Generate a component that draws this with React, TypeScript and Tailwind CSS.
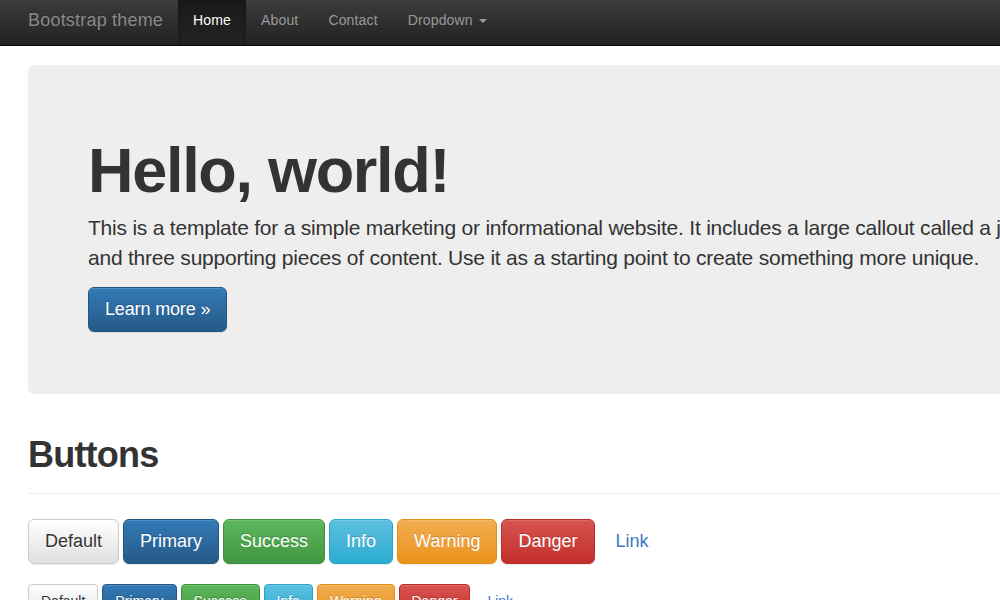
import React from 'react';

interface BtnProps {
  label: string;
  variant: string;
  size: 'lg' | 'md';
}

const variants: Record<string, string> = {
  default:
    'bg-linear-to-b from-[#ffffff] to-[#e0e0e0] border-[#cccccc] text-[#333333] [text-shadow:0_1px_0_#fff]',
  primary:
    'bg-linear-to-b from-[#337ab7] to-[#265a88] border-[#245580] text-white [text-shadow:0_-1px_0_rgba(0,0,0,0.2)]',
  success:
    'bg-linear-to-b from-[#5cb85c] to-[#419641] border-[#3e8f3e] text-white [text-shadow:0_-1px_0_rgba(0,0,0,0.2)]',
  info:
    'bg-linear-to-b from-[#5bc0de] to-[#2aabd2] border-[#28a4c9] text-white [text-shadow:0_-1px_0_rgba(0,0,0,0.2)]',
  warning:
    'bg-linear-to-b from-[#f0ad4e] to-[#eb9316] border-[#e38d13] text-white [text-shadow:0_-1px_0_rgba(0,0,0,0.2)]',
  danger:
    'bg-linear-to-b from-[#d9534f] to-[#c12e2a] border-[#b92c28] text-white [text-shadow:0_-1px_0_rgba(0,0,0,0.2)]',
  link: 'border-transparent text-[#3a78c3]',
};

const Btn: React.FC<BtnProps> = ({ label, variant, size }) => {
  const sizing =
    size === 'lg'
      ? 'h-[45px] px-4 text-[18px] rounded-[6px]'
      : 'h-[34px] px-3 text-[14px] rounded-[4px]';
  const shadow =
    variant === 'link' ? '' : 'shadow-[inset_0_1px_0_rgba(255,255,255,0.15),0_1px_1px_rgba(0,0,0,0.075)]';
  return (
    <button className={`flex items-center border ${sizing} ${variants[variant]} ${shadow}`}>
      {label}
    </button>
  );
};

const buttons = ['Default', 'Primary', 'Success', 'Info', 'Warning', 'Danger', 'Link'];

const Navbar: React.FC = () => (
  <nav className="h-[46px] shrink-0 border-b border-[#080808] bg-linear-to-b from-[#3c3c3c] to-[#222222] flex pl-[13px] text-[14px] leading-[20px] tracking-[0.15px]">
    <a className="pl-[15px] pr-[15px] pt-[10px] text-[18px] tracking-[0.2px] text-[#8a8a8a] [text-shadow:0_-1px_0_rgba(0,0,0,0.25)]">
      Bootstrap theme
    </a>
    <a className="px-[15px] pt-[10px] text-white bg-linear-to-b from-[#1c1c1c] to-[#222222] shadow-[inset_0_3px_9px_rgba(0,0,0,0.25)] [text-shadow:0_-1px_0_rgba(0,0,0,0.25)]">
      Home
    </a>
    <a className="px-[15px] pt-[10px] text-[#999999]">About</a>
    <a className="px-[15px] pt-[10px] text-[#999999]">Contact</a>
    <a className="px-[15px] pt-[10px] text-[#999999] flex items-start">
      Dropdown
      <span className="ml-[6px] mt-[9px] w-0 h-0 border-t-[4px] border-t-[#999999] border-x-[4px] border-x-transparent" />
    </a>
  </nav>
);

const App: React.FC = () => {
  return (
    <div className="w-[1000px] h-[600px] overflow-hidden bg-white font-['Liberation_Sans',Arial,sans-serif] text-[#333333] flex flex-col">
      <Navbar />
      <main className="ml-[28px] w-[1140px] shrink-0 mt-[19px]">
        <section className="bg-[#eeeeee] rounded-[6px] pl-[60px] pt-[71px] pb-[62px] h-[329px]">
          <h1 className="text-[63px] font-bold leading-[69px] tracking-[-1.3px]">Hello, world!</h1>
          <p className="mt-[8px] text-[21px] leading-[30px] tracking-[-0.22px] whitespace-nowrap">
            This is a template for a simple marketing or informational website. It includes a large callout called a jumbotron
            <br />
            and three supporting pieces of content. Use it as a starting point to create something more unique.
          </p>
          <div className="mt-[14px] flex">
            <button className="h-[45px] px-4 flex items-center border rounded-[6px] text-[18px] tracking-[-0.15px] bg-linear-to-b from-[#337ab7] to-[#265a88] border-[#245580] text-white [text-shadow:0_-1px_0_rgba(0,0,0,0.2)] shadow-[inset_0_1px_0_rgba(255,255,255,0.15),0_1px_1px_rgba(0,0,0,0.075)]">
              Learn more »
            </button>
          </div>
        </section>

        <div className="mt-[41px] pb-[18px] border-b border-[#eeeeee]">
          <h1 className="text-[36px] font-bold leading-[40px] tracking-[-0.8px]">Buttons</h1>
        </div>

        <div className="mt-[25px] flex gap-[4px]">
          {buttons.map((b) => (
            <Btn key={b} label={b} variant={b.toLowerCase()} size="lg" />
          ))}
        </div>
        <div className="mt-[20px] flex gap-[4px]">
          {buttons.map((b) => (
            <Btn key={b} label={b} variant={b.toLowerCase()} size="md" />
          ))}
        </div>
      </main>
    </div>
  );
};

export default App;
